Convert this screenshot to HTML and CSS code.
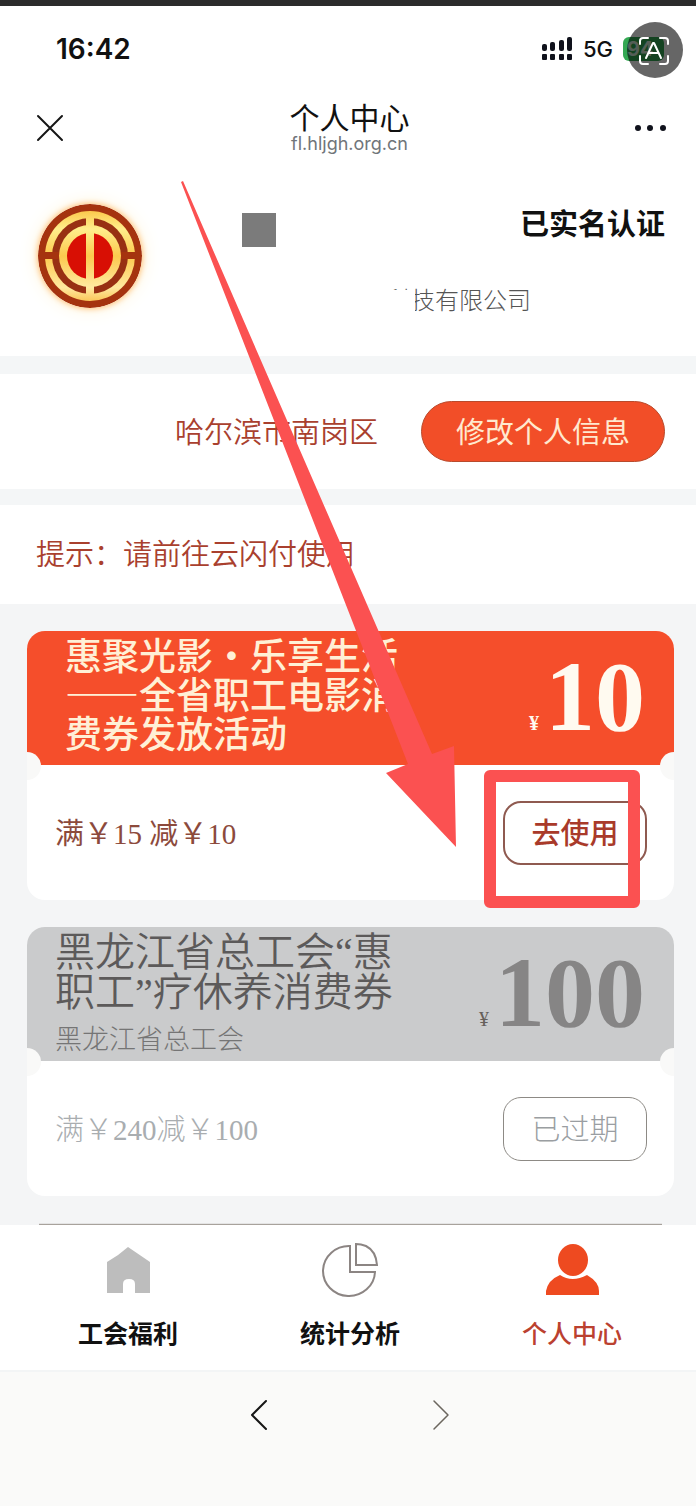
FILE: index.html
```
<!DOCTYPE html>
<html lang="zh-CN">
<head>
    <meta charset="UTF-8">
    <meta name="viewport" content="width=device-width, initial-scale=1.0">
    <title>个人中心</title>
    <link rel="stylesheet" href="styles.css">
</head>
<body>
    <div class="screen">
        <!-- Status bar -->
        <div class="status-bar">
            <span class="time">16:42</span>
            <div class="status-icons">
                <svg class="signal" width="32" height="24" viewBox="0 0 32 24" fill="#10121c">
                    <rect x="1" y="7" width="5" height="7" rx="2"/>
                    <rect x="9" y="5" width="5" height="9" rx="2"/>
                    <rect x="18" y="3" width="5" height="11" rx="2"/>
                    <rect x="26" y="0" width="5" height="14" rx="2"/>
                    <rect x="1" y="17" width="5" height="6" rx="1"/>
                    <rect x="9" y="17" width="5" height="6" rx="1"/>
                    <rect x="18" y="17" width="5" height="6" rx="1"/>
                    <rect x="26" y="17" width="5" height="6" rx="1"/>
                </svg>
                <span class="network">5G</span>
                <span class="battery">94</span>
            </div>
            <button class="scan-btn" aria-label="识别文字">
                <svg width="56" height="56" viewBox="0 0 56 56" fill="none" stroke="#fff" stroke-width="2" stroke-linecap="round" stroke-linejoin="round">
                    <path d="M13 22v-3q0-3 3-3h5M33 16h5q3 0 3 3v3M41 34v5q0 3-3 3h-5M21 42h-5q-3 0-3-3v-5"/>
                    <path d="M19 36l7-15h1l7 15M22 31h9"/>
                </svg>
            </button>
        </div>

        <!-- Title bar -->
        <header class="nav-bar">
            <button class="icon-btn" aria-label="关闭">
                <svg width="28" height="28" viewBox="0 0 28 28" stroke="#161616" stroke-width="2" stroke-linecap="round">
                    <path d="M2 2l24 24M26 2L2 26"/>
                </svg>
            </button>
            <div class="nav-title">
                <h1>个人中心</h1>
                <p>fl.hljgh.org.cn</p>
            </div>
            <button class="icon-btn" aria-label="更多">
                <svg width="32" height="8" viewBox="0 0 32 8" fill="#10121c">
                    <circle cx="3" cy="4" r="3"/>
                    <circle cx="15" cy="4" r="3"/>
                    <circle cx="28" cy="4" r="3"/>
                </svg>
            </button>
        </header>

        <!-- Profile -->
        <section class="profile">
            <svg class="avatar" width="104" height="104" viewBox="0 0 104 104">
                <defs>
                    <linearGradient id="gold" gradientUnits="userSpaceOnUse" x1="0" y1="7" x2="0" y2="97">
                        <stop offset="0" stop-color="#fbc94c"/>
                        <stop offset="0.2" stop-color="#ffee8c"/>
                        <stop offset="0.5" stop-color="#fcc94e"/>
                        <stop offset="0.85" stop-color="#ffe9a0"/>
                        <stop offset="1" stop-color="#fbc75a"/>
                    </linearGradient>
                </defs>
                <circle cx="52" cy="52" r="52" fill="#a5330f"/>
                <circle cx="52" cy="52" r="45" fill="url(#gold)"/>
                <circle cx="52" cy="52" r="38" fill="#983013"/>
                <rect x="5" y="48" width="94" height="7" fill="#a5330f"/>
                <circle cx="52" cy="52" r="31" fill="url(#gold)"/>
                <circle cx="52" cy="52" r="23" fill="#d80f04"/>
                <rect x="48" y="10" width="8" height="84" fill="url(#gold)"/>
            </svg>
            <div class="info">
                <div class="info-row">
                    <span class="name"></span>
                    <strong class="verified">已实名认证</strong>
                </div>
                <div class="company"><span>科技有限公司</span></div>
            </div>
        </section>

        <section class="region">
            <span>哈尔滨市南岗区</span>
            <button class="edit-btn">修改个人信息</button>
        </section>

        <section class="tip">提示：请前往云闪付使用</section>

        <!-- Coupons -->
        <main class="coupons">
            <article class="coupon">
                <div class="coupon-head">
                    <h2>惠聚光影・乐享生活<br>——全省职工电影消<br>费券发放活动</h2>
                    <p class="amount"><small>¥</small>10</p>
                </div>
                <div class="coupon-body">
                    <span class="rule">满￥15 减￥10</span>
                    <button class="use-btn">去使用</button>
                </div>
            </article>
            <article class="coupon expired">
                <div class="coupon-head">
                    <div>
                        <h2>黑龙江省总工会“惠<br>职工”疗休养消费券</h2>
                        <p class="issuer">黑龙江省总工会</p>
                    </div>
                    <p class="amount"><small>¥</small>100</p>
                </div>
                <div class="coupon-body">
                    <span class="rule">满￥240减￥100</span>
                    <button class="use-btn">已过期</button>
                </div>
            </article>
            <div class="coupon-edge"></div>
        </main>

        <!-- Tabs -->
        <nav class="tabs">
            <a href="#welfare">
                <svg width="56" height="56" viewBox="0 0 56 56">
                    <path d="M28 4L50 19V50H35V41q0-5-6-5t-6 5V50H7V19Q18 13 28 4z" fill="#bdbdbd"/>
                </svg>
                工会福利
            </a>
            <a href="#stats">
                <svg width="56" height="56" viewBox="0 0 56 56" fill="none" stroke="#8c8583" stroke-width="2">
                    <path d="M28 3V29H53A26 25 0 1 1 28 3z"/>
                    <path d="M34 1V22H55Q54 8 44 3Q39 1 34 1z"/>
                </svg>
                统计分析
            </a>
            <a href="#me" class="active">
                <svg width="56" height="56" viewBox="0 0 56 56" fill="#ee4a20">
                    <ellipse cx="29" cy="17" rx="15" ry="16"/>
                    <path d="M16 32Q28 40 43 32Q55 39 55 48V52H2V48Q4 37 16 32z"/>
                </svg>
                个人中心
            </a>
        </nav>

        <footer class="browser-bar">
            <button class="icon-btn" aria-label="后退">
                <svg width="18" height="32" viewBox="0 0 18 32" fill="none" stroke="#161616" stroke-width="2" stroke-linecap="round" stroke-linejoin="round">
                    <path d="M16 2L2 16l14 14"/>
                </svg>
            </button>
            <button class="icon-btn" aria-label="前进">
                <svg width="18" height="32" viewBox="0 0 18 32" fill="none" stroke="#6b665f" stroke-width="1.5" stroke-linecap="round" stroke-linejoin="round">
                    <path d="M2 2l14 14L2 30"/>
                </svg>
            </button>
        </footer>

        <!-- Guide arrow over the page -->
        <svg class="guide" width="460" height="730" viewBox="180 180 460 730">
            <path d="M181 182L183 181L432 754L454 746L456 847L386 773L408 764z" fill="#fb5151"/>
            <rect x="490" y="776" width="144" height="126" fill="none" stroke="#fb5151" stroke-width="12" stroke-linejoin="round"/>
        </svg>
    </div>
</body>
</html>
```
FILE: styles.css
```
* {
    box-sizing: border-box;
}
body {
    margin: 0;
    background-color: #fafaf9;
    font-family: "Noto Sans CJK SC", sans-serif;
    font-size: 29px;
    color: #111;
}
h1, h2, p {
    margin: 0;
}
button {
    padding: 0;
    border: none;
    background: none;
    font-family: inherit;
    font-size: 29px;
    cursor: pointer;
}
svg {
    display: block;
}
.screen {
    position: relative;
    border-top: 6px solid #2b2b2b;
    background-color: #f4f6f7;
}

/* status bar */
.status-bar {
    position: relative;
    display: flex;
    justify-content: space-between;
    align-items: center;
    height: 86px;
    padding: 0 32px 0 56px;
    background-color: #fff;
    font-family: Inter, sans-serif;
}
.time {
    font-size: 28px;
    font-weight: 600;
}
.status-icons {
    display: flex;
    align-items: center;
    gap: 10px;
}
.network {
    font-size: 22px;
    font-weight: 500;
}
.battery {
    width: 41px;
    height: 24px;
    border-radius: 6px;
    background-color: #34a853;
    color: #d5ecd9;
    font-size: 20px;
    font-weight: 700;
    line-height: 24px;
    padding-left: 4px;
}
.scan-btn {
    position: absolute;
    right: 13px;
    top: 16px;
    width: 56px;
    height: 56px;
    border-radius: 50%;
    background-color: rgba(0, 0, 0, 0.6);
}

/* title bar */
.nav-bar {
    display: flex;
    justify-content: space-between;
    align-items: center;
    height: 72px;
    padding: 0 29px 0 36px;
    background-color: #fff;
}
.nav-title {
    text-align: center;
}
.nav-title h1 {
    font-size: 30px;
    font-weight: 400;
    line-height: 32px;
}
.nav-title p {
    font-family: Inter, sans-serif;
    font-size: 18px;
    line-height: 24px;
    color: #70757a;
}

/* profile */
.profile {
    display: flex;
    gap: 100px;
    height: 192px;
    padding: 40px 31px 0 38px;
    background-color: #fff;
}
.avatar {
    flex: none;
    border-radius: 50%;
    box-shadow: 0 0 6px #ffb45c, 0 0 20px #fff3d6;
}
.info {
    flex: 1;
}
.info-row {
    display: flex;
    justify-content: space-between;
    align-items: flex-start;
    height: 42px;
    margin-bottom: 35px;
}
.name {
    width: 34px;
    height: 34px;
    background-color: #7b7b7b;
    margin-top: 9px;
}
.verified {
    font-weight: 700;
    line-height: 36px;
}
.company {
    padding-right: 134px;
    text-align: right;
    font-size: 24px;
    font-weight: 300;
    line-height: 36px;
    color: #555;
}
.company span {
    position: relative;
}
/* hides the start of the company name */
.company span::before {
    content: "";
    position: absolute;
    left: -8px;
    top: 9px;
    width: 36px;
    height: 28px;
    background-color: #fff;
}

.region {
    display: flex;
    justify-content: flex-end;
    align-items: center;
    gap: 43px;
    height: 115px;
    margin-top: 18px;
    padding-right: 31px;
    background-color: #fff;
}
.region, .tip {
    color: #a9402e;
    font-weight: 350;
}
.region span {
    padding-bottom: 4px;
}
.edit-btn {
    width: 244px;
    height: 61px;
    padding-bottom: 4px;
    border: 1px solid #b94a2c;
    border-radius: 31px;
    background-color: #f24e28;
    color: #ffe9cf;
}
.tip {
    height: 99px;
    margin-top: 16px;
    padding-left: 36px;
    line-height: 95px;
    background-color: #fff;
}

/* coupons */
.coupons {
    display: flex;
    flex-direction: column;
    gap: 27px;
    padding: 27px 22px 0 27px;
    background-color: #f4f5f6;
}
.coupon {
    position: relative;
    overflow: hidden;
    border-radius: 18px;
    background-color: #fff;
}
.coupon::before,
.coupon::after {
    content: "";
    position: absolute;
    top: 121px;
    left: -14px;
    width: 28px;
    height: 28px;
    border-radius: 50%;
    background-color: #f9f9f8;
}
.coupon::after {
    left: auto;
    right: -14px;
}
.coupon-head {
    display: flex;
    justify-content: space-between;
    height: 134px;
    padding: 4px 29px 0 38px;
    background-color: #f54e2b;
    color: #fff0d6;
}
.coupon-head h2 {
    font-size: 37px;
    font-weight: 500;
    line-height: 39px;
}
.amount {
    font-family: "Liberation Serif", serif;
    font-size: 100px;
    font-weight: 700;
    line-height: 124px;
    color: #fffaf0;
}
.amount small {
    font-size: 20px;
    margin-right: 6px;
}
.coupon-body {
    display: flex;
    justify-content: space-between;
    align-items: center;
    height: 135px;
    padding: 0 27px 0 28px;
}
.rule {
    padding-bottom: 4px;
    font-family: "Liberation Serif", "Noto Sans CJK SC", serif;
    color: #8c4a3c;
}
.use-btn {
    width: 144px;
    height: 64px;
    padding-bottom: 4px;
    border: 2px solid #8f5a50;
    border-radius: 18px;
    color: #a93a2a;
    font-weight: 500;
}

.expired .coupon-head {
    padding-top: 6px;
    padding-left: 28px;
    background-color: #cacbcc;
    color: #5c5a5a;
}
.expired h2 {
    font-family: "Liberation Serif", "Noto Sans CJK SC", serif;
    font-size: 40px;
    font-weight: 350;
    line-height: 40px;
}
.issuer {
    font-size: 27px;
    font-weight: 300;
    line-height: 50px;
    color: #757575;
}
.expired .amount {
    line-height: 120px;
    color: #868585;
}
.expired .amount small {
    color: #66605a;
    font-weight: 400;
}
.expired .rule {
    color: #a9adb0;
    font-weight: 300;
}
.expired .use-btn {
    border: 1px solid #8d8a85;
    color: #9a9ea2;
    font-weight: 300;
}
.coupon-edge {
    height: 2px;
    margin: 0 12px;
    border-top: 1px solid #e4e4e4;
    background-color: #a8a29c;
}

/* tabs */
.tabs {
    display: grid;
    grid-template-columns: repeat(3, 1fr);
    padding: 18px 13px 0 17px;
    height: 145px;
    background-color: #fff;
}
.tabs a {
    display: flex;
    flex-direction: column;
    align-items: center;
    gap: 15px;
    color: #111;
    font-size: 25px;
    font-weight: 700;
    line-height: 36px;
    text-decoration: none;
}
.tabs .active {
    color: #bb4130;
    font-weight: 500;
}

.browser-bar {
    display: flex;
    justify-content: center;
    align-items: flex-start;
    gap: 164px;
    height: 136px;
    padding: 27px 0 0 4px;
    border-top: 2px solid #f3f5f6;
    background-color: #fafaf9;
}

/* guide */
.guide {
    position: absolute;
    left: 180px;
    top: 174px;
    pointer-events: none;
}
```
